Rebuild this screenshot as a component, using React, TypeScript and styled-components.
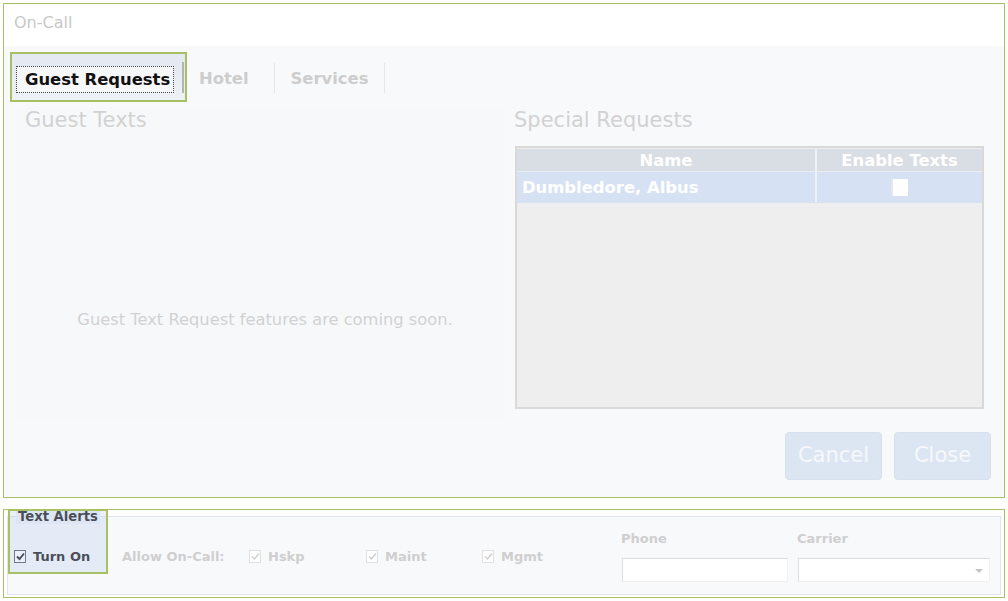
import React from 'react'
import styled, { createGlobalStyle } from 'styled-components'

const GREEN = '#a7c064'
const FONT = `"DejaVu Sans", Verdana, sans-serif`

const GlobalStyle = createGlobalStyle`
  html, body {
    margin: 0;
    padding: 0;
    background: #ffffff;
    font-family: ${FONT};
  }
  * { box-sizing: border-box; }
`

const Page = styled.div`
  width: 1008px;
  height: 601px;
  padding: 3px 4px 0 3px;
  display: flex;
  flex-direction: column;
  gap: 11px;
`

const Window = styled.div`
  width: 1002px;
  height: 495px;
  border: 1px solid ${GREEN};
  display: flex;
  flex-direction: column;
`

const TitleBar = styled.div`
  height: 42px;
  flex-shrink: 0;
  background: #ffffff;
  padding: 0 0 5px 10px;
  display: flex;
  align-items: center;
  font-size: 16px;
  color: #c9c9c9;
`

const Body = styled.div`
  flex: 1;
  background: #f8f9fb;
  padding: 6px 13px 17px 6px;
  display: flex;
  flex-direction: column;
`

const TabStrip = styled.div`
  display: flex;
  align-items: flex-start;
  height: 50px;
`

const ActiveTab = styled.div`
  width: 177px;
  height: 50px;
  border: 2px solid ${GREEN};
  background: linear-gradient(#e4e9f2 0, #e4e9f2 10px, #eef1f6 100%);
  display: flex;
  align-items: center;
  padding: 4px 0 0 4px;
`

const FocusRing = styled.div`
  width: 158px;
  height: 27px;
  border: 1px dotted #444;
  background: #f6f7f9;
  padding-left: 8px;
  display: flex;
  align-items: center;
  font-size: 16.4px;
  font-weight: bold;
  color: #111;
`

const TabEdge = styled.div`
  width: 2px;
  height: 31px;
  margin-left: 8px;
  margin-top: -3px;
  background: #b4b4b4;
`

const Tab = styled.div<{ $pl: number; $pr: number }>`
  margin-top: 11px;
  margin-left: 2px;
  height: 30px;
  padding: 0 ${p => p.$pr}px 0 ${p => p.$pl}px;
  border-right: 1px solid #e6e6e6;
  display: flex;
  align-items: center;
  font-size: 16.4px;
  font-weight: bold;
  color: #cdcdcd;
`

const Content = styled.div`
  display: flex;
  margin-top: 5px;
  margin-left: 5px;
  gap: 9px;
`

const LeftPanel = styled.div`
  width: 490px;
  height: 312px;
  background: #f7f8fa;
  display: flex;
  flex-direction: column;
`

const Heading = styled.div<{ $pl: number }>`
  font-size: 21px;
  line-height: 26px;
  color: #d2d2d2;
  padding-left: ${p => p.$pl}px;
`

const Soon = styled.div`
  flex: 1;
  display: flex;
  align-items: center;
  justify-content: center;
  padding: 86px 0 0 10px;
  font-size: 16.3px;
  color: #d2d2d2;
`

const RightPanel = styled.div`
  display: flex;
  flex-direction: column;
`

const Table = styled.div`
  margin-top: 13px;
  margin-left: 1px;
  width: 469px;
  height: 263px;
  border: 2px solid #d9d9d9;
  background: #eeeeee;
  padding-top: 1px;
  display: flex;
  flex-direction: column;
`

const Row = styled.div<{ $header?: boolean }>`
  display: grid;
  grid-template-columns: 298px 165px;
  column-gap: 2px;
  height: ${p => (p.$header ? 23 : 31)}px;
  background: ${p => (p.$header ? '#d9dde4' : '#d6e2f4')};
  border-bottom: 1px solid ${p => (p.$header ? '#e8ecf2' : '#d6e2f4')};
`

const Cell = styled.div<{ $center?: boolean; $divider?: boolean }>`
  display: flex;
  align-items: center;
  justify-content: ${p => (p.$center ? 'center' : 'flex-start')};
  padding-left: ${p => (p.$center ? 0 : 5)}px;
  font-size: 16.4px;
  font-weight: bold;
  color: #ffffff;
  box-shadow: ${p => (p.$divider ? '-2px 0 0 #eef1f5' : 'none')};
`

const WhiteBox = styled.div`
  width: 17px;
  height: 17px;
  margin-left: 0;
  background: #ffffff;
  border-left: 2px solid #e4e8ef;
`

const ButtonRow = styled.div`
  margin-top: auto;
  display: flex;
  justify-content: flex-end;
  gap: 12px;
`

const Button = styled.div`
  width: 97px;
  height: 48px;
  border-radius: 4px;
  background: #dce6f2;
  border: 1px solid #d7e1ef;
  display: flex;
  align-items: center;
  justify-content: center;
  padding-bottom: 2px;
  font-size: 21px;
  color: #f6f8fc;
`

const Frame = styled.div`
  position: relative;
  width: 1002px;
  height: 89px;
  border: 1px solid ${GREEN};
  background: #ffffff;
  padding: 6px 3px 2px 3px;
`

const Fieldset = styled.div`
  position: relative;
  height: 100%;
  border: 1px solid #dfe5ef;
  background: #f8f9fb;
  display: flex;
  align-items: center;
  padding: 2px 0 0 6px;
`

const Legend = styled.div`
  position: absolute;
  top: -8px;
  left: 8px;
  padding: 0 2px;
  background: #eef2f8;
  font-size: 13.2px;
  font-weight: bold;
  line-height: 15px;
  color: #111;
`

const Highlight = styled.div`
  position: absolute;
  left: 4px;
  top: -1px;
  width: 100px;
  height: 65px;
  border: 2px solid ${GREEN};
  background: rgba(190, 206, 235, 0.32);
  pointer-events: none;
`

const Item = styled.div<{ $w: number }>`
  width: ${p => p.$w}px;
  display: flex;
  align-items: center;
  gap: 7px;
  font-size: 13px;
  font-weight: bold;
  color: #cfcfcf;
`

const Box = styled.div<{ $on?: boolean }>`
  width: 12px;
  height: 13px;
  border: 1px solid ${p => (p.$on ? '#555' : '#e0e0e0')};
  background: #ffffff;
  display: flex;
  align-items: center;
  justify-content: center;
`

const Label = styled.span<{ $dark?: boolean }>`
  color: ${p => (p.$dark ? '#111' : '#cfcfcf')};
`

const FieldGroup = styled.div<{ $w: number }>`
  width: ${p => p.$w}px;
  display: flex;
  flex-direction: column;
  gap: 12px;
`

const FieldLabel = styled.div`
  font-size: 13px;
  line-height: 15px;
  font-weight: bold;
  color: #cfcfcf;
`

const Input = styled.div<{ $w: number }>`
  position: relative;
  width: ${p => p.$w}px;
  height: 24px;
  margin-left: 1px;
  background: #ffffff;
  border-top: 1px solid #dedede;
  border-left: 1px solid #dedede;
  border-right: 1px solid #f2f2f2;
  border-bottom: 1px solid #f2f2f2;
`

const Arrow = styled.div`
  position: absolute;
  right: 6px;
  top: 10px;
  width: 0;
  height: 0;
  border-left: 4px solid transparent;
  border-right: 4px solid transparent;
  border-top: 4px solid #c4c4c4;
`

const Check = ({ dark }: { dark?: boolean }) => (
  <svg width="9" height="9" viewBox="0 0 9 9">
    <path d="M1 4.5 L3.5 7 L8 1.5" fill="none" stroke={dark ? '#111' : '#cfcfcf'} strokeWidth={dark ? 1.9 : 1.5} />
  </svg>
)

const App: React.FC = () => {
  return (
    <>
      <GlobalStyle />
      <Page>
        <Window>
          <TitleBar>On-Call</TitleBar>
          <Body>
            <TabStrip>
              <ActiveTab>
                <FocusRing>Guest Requests</FocusRing>
                <TabEdge />
              </ActiveTab>
              <Tab $pl={10} $pr={25}>Hotel</Tab>
              <Tab $pl={14} $pr={16}>Services</Tab>
            </TabStrip>
            <Content>
              <LeftPanel>
                <Heading $pl={10}>Guest Texts</Heading>
                <Soon>Guest Text Request features are coming soon.</Soon>
              </LeftPanel>
              <RightPanel>
                <Heading $pl={0}>Special Requests</Heading>
                <Table>
                  <Row $header>
                    <Cell $center>Name</Cell>
                    <Cell $center $divider>Enable Texts</Cell>
                  </Row>
                  <Row>
                    <Cell>Dumbledore, Albus</Cell>
                    <Cell $center $divider><WhiteBox /></Cell>
                  </Row>
                </Table>
              </RightPanel>
            </Content>
            <ButtonRow>
              <Button>Cancel</Button>
              <Button>Close</Button>
            </ButtonRow>
          </Body>
        </Window>
        <Frame>
          <Fieldset>
            <Legend>Text Alerts</Legend>
            <Item $w={108}>
              <Box $on><Check dark /></Box>
              <Label $dark>Turn On</Label>
            </Item>
            <Item $w={127}>Allow On-Call:</Item>
            <Item $w={117}>
              <Box><Check /></Box>
              <Label>Hskp</Label>
            </Item>
            <Item $w={116}>
              <Box><Check /></Box>
              <Label>Maint</Label>
            </Item>
            <Item $w={139}>
              <Box><Check /></Box>
              <Label>Mgmt</Label>
            </Item>
            <FieldGroup $w={176}>
              <FieldLabel>Phone</FieldLabel>
              <Input $w={166} />
            </FieldGroup>
            <FieldGroup $w={193}>
              <FieldLabel>Carrier</FieldLabel>
              <Input $w={192}><Arrow /></Input>
            </FieldGroup>
          </Fieldset>
          <Highlight />
        </Frame>
      </Page>
    </>
  )
}

export default App
